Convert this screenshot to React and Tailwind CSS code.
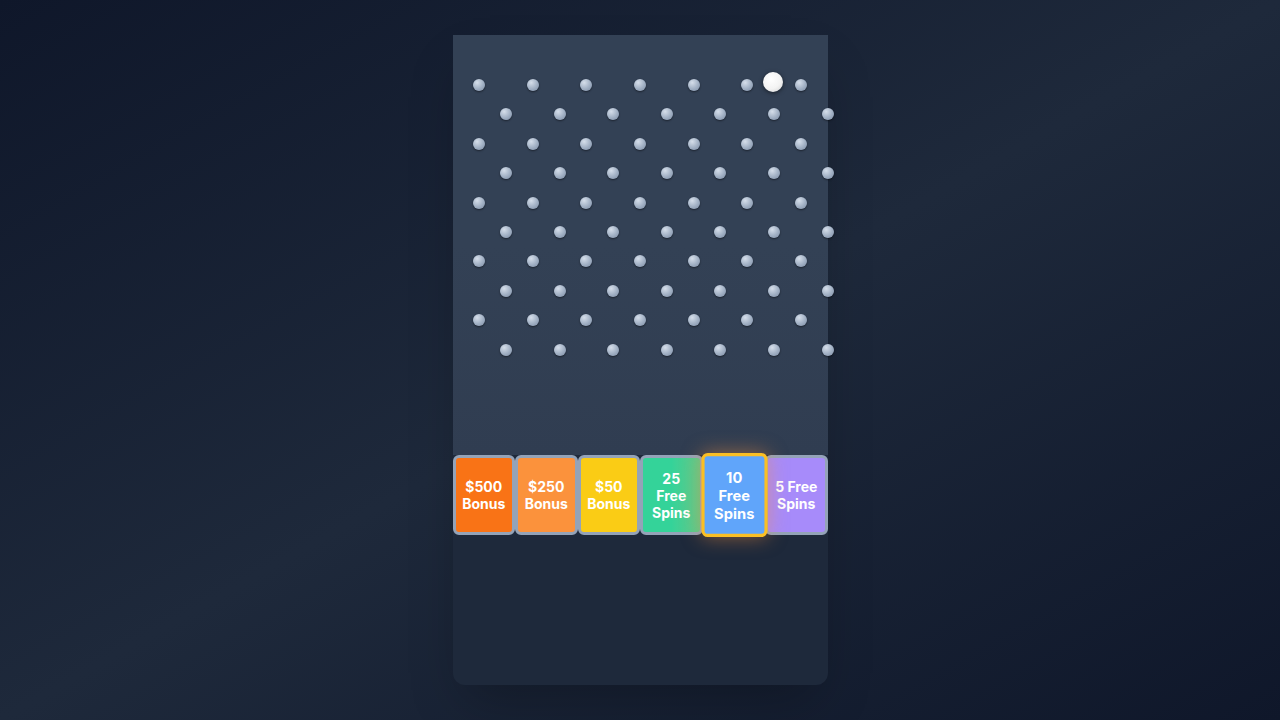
import React from 'react';

const COLS = 7;
const WIDTH = 375;
const ROWS = 10;

const slots = [
  { label: ['$500', 'Bonus'], className: 'bg-[#f97316] border-[#94a3b8]' },
  { label: ['$250', 'Bonus'], className: 'bg-[#fb923c] border-[#94a3b8]' },
  { label: ['$50', 'Bonus'], className: 'bg-[#facc15] border-[#94a3b8]' },
  { label: ['25', 'Free', 'Spins'], className: 'bg-gradient-to-r from-[#34d399] via-[#34d399] to-[#5cc98a] border-[#94a3b8]' },
  { label: ['10', 'Free', 'Spins'], className: 'bg-[#60a5fa] border-[#fbbf24] scale-105 z-10 shadow-[0_0_18px_rgba(251,146,60,0.5)]' },
  { label: ['5 Free', 'Spins'], className: 'bg-[#a78bfa] border-[#94a3b8]' },
];

// peg layout on the board canvas
const pegs = [];
for (let r = 0; r < ROWS; r++) {
  const odd = r % 2 === 1;
  for (let i = 0; i < COLS; i++) {
    const x = odd ? ((i + 1) * WIDTH) / COLS : ((i + 0.5) * WIDTH) / COLS;
    const y = 50 + r * 29.4;
    pegs.push({ x, y, key: `${r}-${i}` });
  }
}

const Peg = ({ x, y }) => (
  <div
    className="absolute w-3 h-3 rounded-full bg-[radial-gradient(circle_at_35%_30%,#d5deea,#a0afc3_55%,#7d8ca3)] shadow-[0_1px_2px_rgba(0,0,0,0.45)]"
    style={{ left: x - 6, top: y - 6 }}
  />
);

export default function App() {
  return (
    <div className="min-h-screen w-full flex items-center justify-center bg-gradient-to-br from-[#0f172a] via-[#1e293b] to-[#0f172a] font-['Inter','Noto_Sans',sans-serif]">
      <div className="w-[375px] h-[650px] flex flex-col rounded-b-xl bg-[#1e293b] shadow-2xl">
        {/* board */}
        <div className="relative h-[420px] bg-gradient-to-b from-[#334155] via-[#334155] to-[#303d51]">
          {pegs.map(p => (
            <Peg key={p.key} x={p.x} y={p.y} />
          ))}
          <div className="absolute left-[310px] top-[37px] w-5 h-5 rounded-full bg-[radial-gradient(circle_at_40%_35%,#ffffff,#f3f3f3_55%,#d0d0d0)] shadow-[0_1px_4px_rgba(0,0,0,0.55)]" />
        </div>

        {/* prize slots */}
        <div className="flex h-[80px]">
          {slots.map((s, idx) => (
            <div
              key={idx}
              className={`relative flex-1 flex flex-col items-center justify-center border-[3px] rounded-md text-white font-bold text-[14px] leading-[17px] text-center ${s.className}`}
            >
              {s.label.map(line => (
                <span key={line}>{line}</span>
              ))}
            </div>
          ))}
        </div>

        <div className="flex-1" />
      </div>
    </div>
  );
}
